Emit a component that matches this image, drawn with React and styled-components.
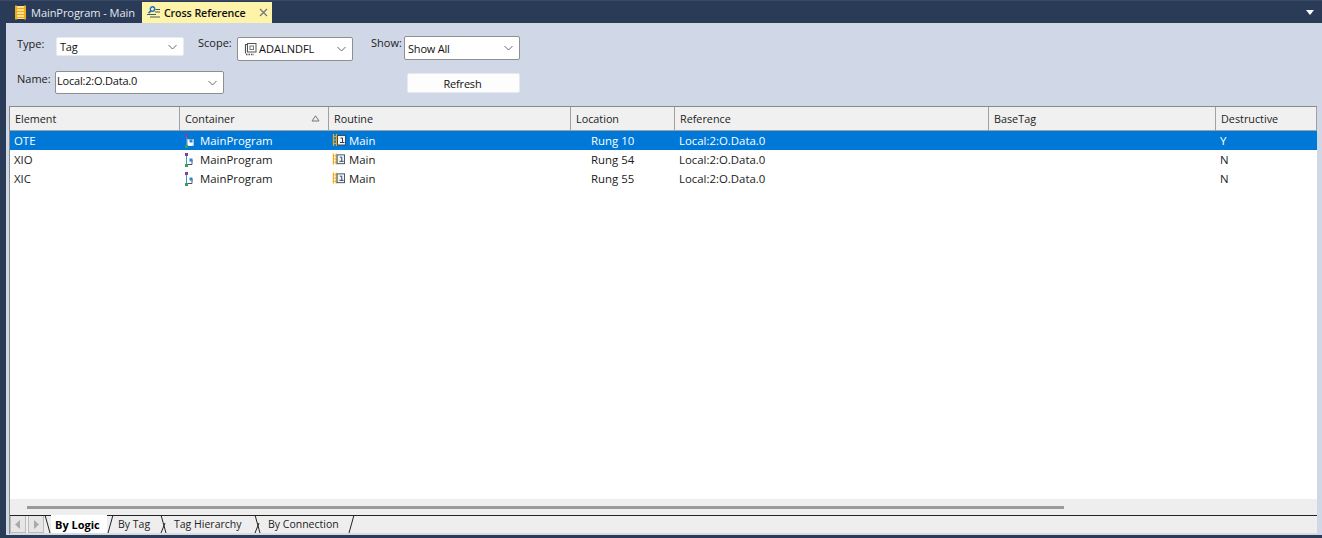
import React from "react";
import styled, { createGlobalStyle } from "styled-components";

const Global = createGlobalStyle`
  html, body { margin: 0; padding: 0; background: #2a3b58; }
  body { font-family: "Open Sans", "Noto Sans", "Liberation Sans", sans-serif; font-size: 11px; color: #1c1c1c; }
  #root { width: 1322px; height: 538px; overflow: hidden; }
`;

const Window = styled.div`
  width: 1322px; height: 538px; background: #2a3b58; display: flex; flex-direction: column;
`;
const TabBar = styled.div`
  height: 23px; flex: none; display: flex; align-items: stretch; padding: 1px 0 0 15px; position: relative; box-sizing: border-box;
  border-top: 1px solid #3a4a66;
`;
const DocTab = styled.div`
  display: flex; align-items: center; gap: ${p => p.$active ? "3px" : "5px"};
  height: 21px; box-sizing: border-box;
  padding: ${p => p.$active ? "0 4px 0 4px" : "0 7px 0 0"};
  background: ${p => p.$active ? "#fdf3a9" : "transparent"};
  color: ${p => p.$active ? "#111" : "#e4e8f0"};
  font-weight: ${p => p.$active ? 600 : 400};
  font-size: ${p => p.$active ? 10.7 : 11.1}px; white-space: nowrap; letter-spacing: -0.1px;
`;
const CloseX = styled.span`
  margin-left: 10px; display: flex;
`;
const MenuCaret = styled.div`
  position: absolute; right: 8px; top: 9px; width: 0; height: 0;
  border-left: 4px solid transparent; border-right: 4px solid transparent; border-top: 5px solid #fff;
`;
const Panel = styled.div`
  flex: none; height: 512px; margin-left: 6px; box-sizing: border-box; background: #d0d7e6;
  padding: 0 5px 1px 3px; display: flex; flex-direction: column;
`;
const Filters = styled.div`
  height: 83px; flex: none; display: flex; flex-direction: column; padding-left: 8px; box-sizing: border-box;
`;
const FilterRow = styled.div`
  display: flex; align-items: flex-start; height: ${p => p.$h}px; padding-top: ${p => p.$top}px; box-sizing: border-box;
`;
const Label = styled.div`
  width: ${p => p.$w}px; flex: none; font-size: 11px; color: #222; line-height: 15px; margin-top: ${p => p.$mt || 0}px; margin-left: ${p => p.$ml || 0}px;
`;
const Combo = styled.div`
  width: ${p => p.$w}px; height: ${p => p.$h}px; flex: none; box-sizing: border-box; background: #fff;
  margin-top: ${p => p.$mt || 0}px; margin-left: ${p => p.$ml || 0}px;
  border: 1px solid ${p => p.$plain ? "#e8ebf2" : "#8f8f8f"}; border-radius: 2px;
  display: flex; align-items: center; padding: 0 6px 0 ${p => p.$pl ?? 2}px; gap: ${p => p.$gap ?? 1}px; font-size: 11px; color: #111; white-space: nowrap;
`;
const ComboText = styled.span`
  flex: 1; letter-spacing: ${p => p.$track ?? -0.2}px; margin-bottom: ${p => p.$up || 0}px;
`;
const Refresh = styled.button`
  width: 113px; height: 20px; margin-left: 183px; margin-top: 2px; background: #fdfdfd; border: 1px solid #e6e9f0; border-radius: 2px;
  font: 11px "Open Sans", sans-serif; color: #111; padding: 0 2px 0 0; letter-spacing: -0.2px;
`;
const Grid = styled.div`
  flex: 1; min-height: 0; background: #fff; border: 1px solid #8a8a8a; border-bottom: none; border-right: none; display: flex; flex-direction: column;
`;
const Row = styled.div`
  display: grid; grid-template-columns: 170px 149px 242px 104px 314px 227px 101px;
`;
const Header = styled(Row)`
  height: 24px; flex: none; background: #f0f0f0; border-bottom: 1px solid #a0a0a0; box-sizing: border-box;
`;
const HeadCell = styled.div`
  display: flex; align-items: center; justify-content: space-between; padding: 0 8px 0 5px; border-right: 1px solid #a0a0a0; font-size: 10.8px; color: #222;
`;
const Rows = styled.div`
  flex: 1; min-height: 0;
`;
const DataRow = styled(Row)`
  height: 19px; background: ${p => p.$sel ? "#0078d7" : "#fff"}; color: ${p => p.$sel ? "#fff" : "#1a1a1a"};
  font-size: 11.4px; align-items: center;
`;
const Cell = styled.div`
  display: flex; align-items: center; gap: ${p => p.$gap || 0}px; padding-left: ${p => p.$pl ?? 4}px; white-space: nowrap; overflow: hidden; height: 19px;
`;
const ScrollArea = styled.div`
  height: 16px; flex: none; background: #eeeeee; display: flex; align-items: center; padding: 0 0 0 17px;
`;
const ScrollThumb = styled.div`
  width: 1037px; height: 3px; background: #9a9a9a;
`;
const TabStrip = styled.div`
  height: 19px; flex: none; background: #eeeeee; border-top: 1px solid #222; border-bottom: 1px solid #ddd; box-sizing: border-box; display: flex; align-items: stretch; font-size: 10.5px;
`;
const ArrowBtn = styled.div`
  width: 16px; box-sizing: border-box; border: 1px solid #bbb; border-top: none; margin-left: ${p => p.$ml || 0}px; display: flex; align-items: center; justify-content: center; background: #e6e6e6;
`;
const SheetTab = styled.div`
  display: flex; align-items: center; width: ${p => p.$w}px; padding: 0 0 ${p => p.$on ? 0 : 2}px ${p => p.$pl}px; box-sizing: border-box;
  font-weight: ${p => p.$on ? 700 : 400}; font-size: ${p => p.$on ? 11 : 10.5}px; color: ${p => p.$on ? "#000" : "#222"};
  background: ${p => p.$on ? "#fff" : "transparent"}; margin-top: ${p => p.$on ? "-1px" : 0}; white-space: nowrap;
`;
const Slash = styled.svg`
  width: 7px; height: 18px; flex: none; margin-top: -1px;
`;

const Ladder = () => (
  <svg width="11" height="15" viewBox="0 0 11 15" fill="none">
    <rect x="1" y="1" width="9" height="13" fill="#fbe08a" />
    <path d="M1 .5v14M10 .5v14" stroke="#f0a81e" strokeWidth="2" />
    <path d="M1 3.500h9M1 6.500h9M1 9.500h9M1 12.500h9" stroke="#f0a81e" strokeWidth="1" />
  </svg>
);
const XRef = () => (
  <svg width="15" height="13" viewBox="0 0 15 13" fill="none">
    <circle cx="6.500" cy="3" r="2.200" stroke="#1f6fc4" strokeWidth="1.400" />
    <path d="M5 4.800 2.500 7.200" stroke="#1f6fc4" strokeWidth="1.600" />
    <path d="M1 8.500h9M4 11h10M9 6h5M9.500 3.500h4.500" stroke="#4a5a5a" strokeWidth="1" />
  </svg>
);
const Close = () => (
  <svg width="9" height="9" viewBox="0 0 9 9"><path d="M1 1l7 7M8 1l-7 7" stroke="#777" strokeWidth="1.3" /></svg>
);
const Chevron = () => (
  <svg width="9" height="6" viewBox="0 0 9 6" fill="none"><path d="M.5 1 4.500 5 8.500 1" stroke="#666" strokeWidth="1" /></svg>
);
const ScopeIcon = () => (
  <svg width="13" height="14" viewBox="0 0 13 14" fill="none">
    <path d="M1.500 2v9.500M1.500 2.500h3" stroke="#555" strokeWidth="1.2" />
    <rect x="3.500" y="1.500" width="8.500" height="8.500" fill="#fff" stroke="#555" />
    <rect x="6" y="4" width="3.500" height="3.500" stroke="#777" />
    <path d="M2 12.500h8" stroke="#555" strokeWidth="1.400" strokeDasharray="1.500 1" />
  </svg>
);
const ProgramIcon = ({ sel }) => (
  <svg width="10" height="14" viewBox="0 0 10 14" fill="none">
    {sel && <rect x="3.500" y="5.500" width="6" height="6" fill="#fff" stroke="#9fc6e8" />}
    <path d="M2.500 3v8.500" stroke="#4a90c0" strokeWidth="1" />
    <path d="M2.500 11.500H8M8 7v4.500" stroke={sel ? "#eaf3fb" : "#555"} strokeWidth="1" />
    <rect x="1" y="0" width="3" height="3" fill="#8a3f9c" />
    <rect x="1" y="11" width="3" height="3" fill="#2fa55a" />
    <rect x="5.500" y="5.500" width="3" height="3" fill="#2f86c8" />
  </svg>
);
const RoutineIcon = ({ sel }) => (
  <svg width={sel ? 14 : 13} height="13" viewBox="0 0 14 13" fill="none">
    <path d="M1.500 0v12M4.500 0v12" stroke="#f5a81c" strokeWidth="1.300" />
    <path d="M1 2.500h4M1 6h4M1 9.500h4" stroke="#f5a81c" />
    <rect x="5.500" y="1.500" width="8" height="9.500" fill="#eef5fb" stroke="#3a4f60" />
    <path d="M8.500 4h2v4.500M8 8.500h4.500" stroke="#2f3f4f" />
  </svg>
);
const Triangle = () => (
  <svg width="9" height="7" viewBox="0 0 9 7" fill="none"><path d="M4.500 .8 8 6H1Z" stroke="#777" /></svg>
);
const ArrowGlyph = ({ right }) => (
  <svg width="6" height="9" viewBox="0 0 6 9"><path d={right ? "M1 0l5 4.500L1 9Z" : "M5 0 0 4.500 5 9Z"} fill="#aaa" /></svg>
);
const Sep = ({ d }) => (
  <Slash viewBox="0 0 7 18" fill="none"><path d={d} stroke="#222" strokeWidth="1" /></Slash>
);

const columns = ["Element", "Container", "Routine", "Location", "Reference", "BaseTag", "Destructive"];
const rows = [
  { el: "OTE", rung: "Rung 10", d: "Y", sel: true },
  { el: "XIO", rung: "Rung 54", d: "N" },
  { el: "XIC", rung: "Rung 55", d: "N" },
];

export default function App() {
  return (
    <Window>
      <Global />
      <TabBar>
        <DocTab><Ladder /><span>MainProgram - Main</span></DocTab>
        <DocTab $active><XRef /><span>Cross Reference</span><CloseX><Close /></CloseX></DocTab>
        <MenuCaret />
      </TabBar>
      <Panel>
        <Filters>
          <FilterRow $h={47} $top={14}>
            <Label $w={39} $mt={-1}>Type:</Label>
            <Combo $w={128} $h={19} $plain $pl={3}><ComboText>Tag</ComboText><Chevron /></Combo>
            <Label $w={39} $ml={14} $mt={-2}>Scope:</Label>
            <Combo $w={116} $h={24} $pl={6} $gap={2}><ScopeIcon /><ComboText $up={1} $track={0}>ADALNDFL</ComboText><Chevron /></Combo>
            <Label $w={33} $ml={18} $mt={-2}>Show:</Label>
            <Combo $w={116} $h={24} $mt={-1} $pl={3}><ComboText>Show All</ComboText><Chevron /></Combo>
          </FilterRow>
          <FilterRow $h={36} $top={1}>
            <Label $w={38}>Name:</Label>
            <Combo $w={169} $h={23} $pl={1}><ComboText $up={5}>Local:2:O.Data.0</ComboText><Chevron /></Combo>
            <Refresh>Refresh</Refresh>
          </FilterRow>
        </Filters>
        <Grid>
          <Header>
            {columns.map(c => (
              <HeadCell key={c}>
                <span>{c}</span>
                {c === "Container" && <Triangle />}
              </HeadCell>
            ))}
          </Header>
          <Rows>
            {rows.map(r => (
              <DataRow key={r.el} $sel={r.sel}>
                <Cell>{r.el}</Cell>
                <Cell $gap={6}><ProgramIcon sel={r.sel} />MainProgram</Cell>
                <Cell $pl={3} $gap={r.sel ? 3 : 4}><RoutineIcon sel={r.sel} />Main</Cell>
                <Cell $pl={20}>{r.rung}</Cell>
                <Cell>Local:2:O.Data.0</Cell>
                <Cell />
                <Cell>{r.d}</Cell>
              </DataRow>
            ))}
          </Rows>
          <ScrollArea><ScrollThumb /></ScrollArea>
          <TabStrip>
            <ArrowBtn><ArrowGlyph /></ArrowBtn>
            <ArrowBtn $ml={2}><ArrowGlyph right /></ArrowBtn>
            <Sep d="M1 0l5 18" />
            <SheetTab $on $w={56} $pl={4}>By Logic</SheetTab>
            <Sep d="M6 0 1 18" />
            <SheetTab $w={46} $pl={4}>By Tag</SheetTab>
            <Sep d="M1 0l5 18M5 8 1 18" />
            <SheetTab $w={87} $pl={7}>Tag Hierarchy</SheetTab>
            <Sep d="M1 0l5 18M5 8 1 18" />
            <SheetTab $w={87} $pl={7}>By Connection</SheetTab>
            <Sep d="M6 0 1 18" />
          </TabStrip>
        </Grid>
      </Panel>
    </Window>
  );
}
